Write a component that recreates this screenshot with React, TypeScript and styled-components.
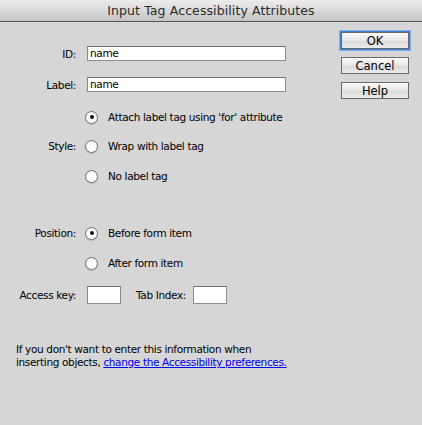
import React from "react";
import styled, { createGlobalStyle } from "styled-components";

const Global = createGlobalStyle`
  html, body { margin: 0; padding: 0; background: #d6d6d6; }
  body { font-family: "DejaVu Sans", "Liberation Sans", sans-serif; }
`;

const Window = styled.div`
  width: 422px;
  height: 425px;
  background: #d6d6d6;
  display: flex;
  flex-direction: column;
  border-radius: 0 0 5px 5px;
  overflow: hidden;
  color: #000;
`;

const TitleBar = styled.div`
  height: 21px;
  flex: none;
  background: linear-gradient(#ececec, #d9d9d9 50%, #c4c4c4);
  border-bottom: 1px solid #555;
  display: flex;
  align-items: center;
  justify-content: center;
  font-size: 12.5px;
  color: #2a2a2a;
  letter-spacing: 0.1px;
`;

const Body = styled.div`
  flex: 1;
  display: flex;
  padding: 0 13px 0 0;
`;

const Form = styled.div`
  flex: 1;
  display: flex;
  flex-direction: column;
  padding-top: 24px;
  font-size: 10.5px;
  letter-spacing: -0.35px;
`;

const Row = styled.div<{ $mt?: number; $h?: number }>`
  display: grid;
  grid-template-columns: 76px auto;
  column-gap: 9px;
  align-items: center;
  margin-top: ${(p) => p.$mt ?? 0}px;
  height: ${(p) => p.$h ?? 16}px;
`;

const FieldLabel = styled.span`
  text-align: right;
  white-space: nowrap;
`;

const TextInput = styled.div`
  width: 195px;
  height: 13px;
  margin-left: 2px;
  background: #fff;
  border: 1px solid #8c8c8c;
  border-top-color: #6e6e6e;
  font-size: 10.5px;
  line-height: 13px;
  padding-left: 2px;
`;

const KeyLine = styled.div`
  display: flex;
  align-items: center;
  margin-left: 2px;
`;

const SmallBox = styled.div`
  width: 32px;
  height: 16px;
  background: #fff;
  border: 1px solid #8c8c8c;
  border-top-color: #6e6e6e;
`;

const InlineLabel = styled.span`
  margin: 0 7px 0 15px;
  white-space: nowrap;
`;

const RadioLine = styled.div`
  display: flex;
  align-items: center;
  gap: 10px;
`;

const Radio = styled.span<{ $on?: boolean }>`
  width: 11px;
  height: 11px;
  border-radius: 50%;
  border: 1px solid #6f6f6f;
  background: radial-gradient(circle at 50% 70%, #ffffff 40%, #ececec);
  box-shadow: 0 1px 1px rgba(0, 0, 0, 0.15);
  display: flex;
  align-items: center;
  justify-content: center;
  &::after {
    content: "";
    width: 4px;
    height: 4px;
    border-radius: 50%;
    background: #111;
    display: ${(p) => (p.$on ? "block" : "none")};
  }
`;

const Note = styled.p`
  margin: 39px 0 0 16px;
  font-size: 10.5px;
  line-height: 13px;
`;

const Link = styled.a`
  color: #0000ee;
  text-decoration: underline;
`;

const Buttons = styled.div`
  display: flex;
  flex-direction: column;
  gap: 8px;
  padding-top: 10px;
  width: 68px;
`;

const Button = styled.div<{ $default?: boolean }>`
  height: 15px;
  border: 1px solid #6a6a6a;
  background: linear-gradient(#fbfbfb, #e6e6e6 50%, #d8d8d8 51%, #ececec);
  display: flex;
  align-items: center;
  justify-content: center;
  font-size: 11.5px;
  box-shadow: ${(p) =>
    p.$default ? "0 0 0 1px #3f7fce, 0 0 0 2px #7fb0e8" : "none"};
`;

export default function App() {
  return (
    <Window>
      <Global />
      <TitleBar>Input Tag Accessibility Attributes</TitleBar>
      <Body>
        <Form>
          <Row $h={15}>
            <FieldLabel>ID:</FieldLabel>
            <TextInput>name</TextInput>
          </Row>
          <Row $mt={16} $h={15}>
            <FieldLabel>Label:</FieldLabel>
            <TextInput>name</TextInput>
          </Row>
          <Row $mt={17}>
            <span />
            <RadioLine>
              <Radio $on />
              Attach label tag using 'for' attribute
            </RadioLine>
          </Row>
          <Row $mt={13}>
            <FieldLabel>Style:</FieldLabel>
            <RadioLine>
              <Radio />
              Wrap with label tag
            </RadioLine>
          </Row>
          <Row $mt={14}>
            <span />
            <RadioLine>
              <Radio />
              No label tag
            </RadioLine>
          </Row>
          <Row $mt={41}>
            <FieldLabel>Position:</FieldLabel>
            <RadioLine>
              <Radio $on />
              Before form item
            </RadioLine>
          </Row>
          <Row $mt={14}>
            <span />
            <RadioLine>
              <Radio />
              After form item
            </RadioLine>
          </Row>
          <Row $mt={15} $h={18}>
            <FieldLabel>Access key:</FieldLabel>
            <KeyLine>
              <SmallBox />
              <InlineLabel>Tab Index:</InlineLabel>
              <SmallBox />
            </KeyLine>
          </Row>
          <Note>
            If you don't want to enter this information when
            <br />
            inserting objects, <Link href="#">change the Accessibility preferences.</Link>
          </Note>
        </Form>
        <Buttons>
          <Button $default>OK</Button>
          <Button>Cancel</Button>
          <Button>Help</Button>
        </Buttons>
      </Body>
    </Window>
  );
}
